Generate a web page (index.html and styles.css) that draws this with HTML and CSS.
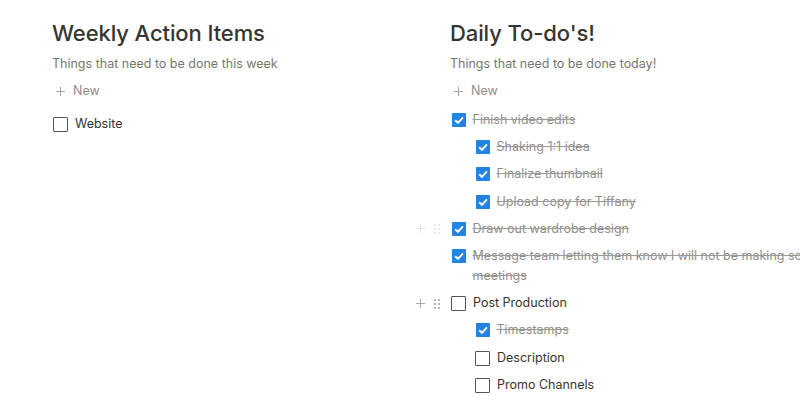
FILE: index.html
```html
<!DOCTYPE html>
<html lang="en">
<head>
  <meta charset="UTF-8">
  <title>To-do Boards</title>
  <link rel="stylesheet" href="styles.css">
</head>
<body>
  <div class="board">
    <section class="column">
      <h2>Weekly Action Items</h2>
      <p class="desc">Things that need to be done this week</p>
      <div class="new"><svg class="plus" viewBox="0 0 12 12"><path d="M6 1v10M1 6h10"/></svg>New</div>
      <ul class="todos first-left">
        <li class="todo"><span class="box"></span><span class="label">Website</span></li>
      </ul>
    </section>

    <section class="column">
      <h2>Daily To-do's!</h2>
      <p class="desc">Things that need to be done today!</p>
      <div class="new"><svg class="plus" viewBox="0 0 12 12"><path d="M6 1v10M1 6h10"/></svg>New</div>
      <ul class="todos">
        <li class="todo done"><span class="box"></span><span class="label">Finish video edits</span></li>
        <li class="todo done sub"><span class="box"></span><span class="label">Shaking 1:1 idea</span></li>
        <li class="todo done sub"><span class="box"></span><span class="label">Finalize thumbnail</span></li>
        <li class="todo done sub"><span class="box"></span><span class="label">Upload copy for Tiffany</span></li>
        <li class="todo done">
          <span class="handles faint"><svg class="add" viewBox="0 0 12 12"><path d="M6 1v10M1 6h10"/></svg><span class="grip"></span></span>
          <span class="box"></span><span class="label">Draw out wardrobe design</span>
        </li>
        <li class="todo done"><span class="box"></span><span class="label">Message team letting them know I will not be making some meetings</span></li>
        <li class="todo">
          <span class="handles"><svg class="add" viewBox="0 0 12 12"><path d="M6 1v10M1 6h10"/></svg><span class="grip"></span></span>
          <span class="box"></span><span class="label">Post Production</span>
        </li>
        <li class="todo done sub"><span class="box"></span><span class="label">Timestamps</span></li>
        <li class="todo sub"><span class="box"></span><span class="label">Description</span></li>
        <li class="todo sub"><span class="box"></span><span class="label">Promo Channels</span></li>
      </ul>
    </section>
  </div>
</body>
</html>
```

FILE: styles.css
```css
body {
  margin: 0;
  background: #ffffff;
  color: #37352f;
  font-family: Inter, "Noto Sans", sans-serif;
  overflow: hidden;
}

.board {
  display: grid;
  grid-template-columns: 398px 375px;
  padding: 20px 0 0 52px;
  width: 900px;
}

.column h2 {
  margin: 0;
  font-size: 22px;
  font-weight: 500;
  line-height: 26px;
  letter-spacing: -0.1px;
}

.desc {
  margin: 8px 0 0;
  font-size: 12.5px;
  line-height: 20px;
  color: #78776f;
}

.new {
  display: flex;
  align-items: center;
  margin-top: 7px;
  font-size: 12.5px;
  line-height: 20px;
  color: #8e8d89;
}

.plus {
  width: 11px;
  height: 11px;
  margin: 0 7px 0 3px;
  fill: none;
  stroke: #9d9c98;
  stroke-width: 1;
}

.todos {
  list-style: none;
  margin: 5px 0 0;
  padding: 0;
}

.first-left {
  margin-top: 9px;
}

.todo {
  position: relative;
  display: flex;
  align-items: flex-start;
  padding: 4px 0 3.2px;
  font-size: 12.5px;
  line-height: 20px;
}

.todo.sub {
  padding-left: 24px;
}

.box {
  flex: none;
  width: 13px;
  height: 13px;
  margin: 3px 7px 0 1px;
  border: 1.5px solid #55544f;
  border-radius: 1px;
}

.done .box {
  width: 14px;
  height: 14px;
  border: none;
  background: #2383e2 url("data:image/svg+xml,%3Csvg xmlns='http://www.w3.org/2000/svg' viewBox='0 0 14 14'%3E%3Cpath d='M3.2 7.2 6 9.8 10.9 4.4' fill='none' stroke='white' stroke-width='1.9'/%3E%3C/svg%3E") center/14px no-repeat;
  margin: 3px 7px 0 1.5px;
}

.done .label {
  color: #8f8e8a;
  text-decoration: line-through;
  text-decoration-color: #9b9a96;
}

.handles {
  position: absolute;
  left: -35px;
  top: 4px;
  display: flex;
  align-items: center;
  gap: 7px;
  height: 20px;
}

.handles.faint {
  opacity: 0.3;
}

.add {
  width: 11px;
  height: 11px;
  fill: none;
  stroke: #a8a7a3;
  stroke-width: 1;
}

.grip {
  width: 7px;
  height: 11px;
  background: radial-gradient(circle, #b3b2ae 0.9px, transparent 1.2px) 0 0/4px 4px;
}
```
